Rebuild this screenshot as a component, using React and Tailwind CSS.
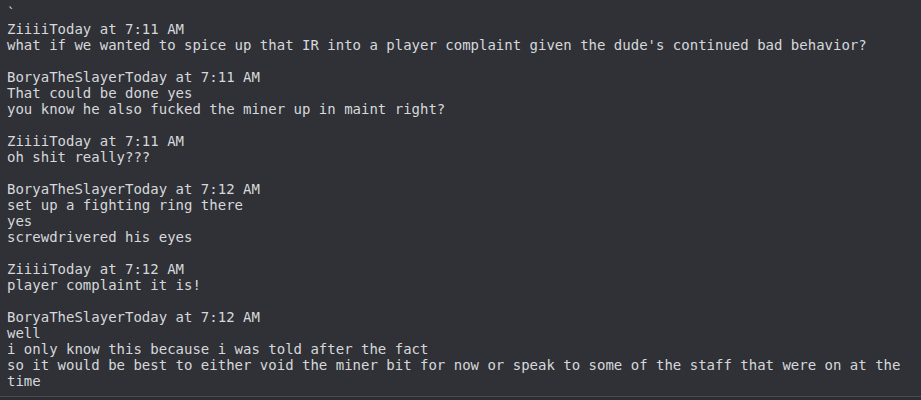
import React from "react";

const text = `\`
ZiiiiToday at 7:11 AM
what if we wanted to spice up that IR into a player complaint given the dude's continued bad behavior?

BoryaTheSlayerToday at 7:11 AM
That could be done yes
you know he also fucked the miner up in maint right?

ZiiiiToday at 7:11 AM
oh shit really???

BoryaTheSlayerToday at 7:12 AM
set up a fighting ring there
yes
screwdrivered his eyes

ZiiiiToday at 7:12 AM
player complaint it is!

BoryaTheSlayerToday at 7:12 AM
well
i only know this because i was told after the fact
so it would be best to either void the miner bit for now or speak to some of the staff that were on at the time`;

export default function App() {
  return (
    <div className="w-[921px] h-[400px] bg-[#2b2d31]">
      <pre className="w-[921px] h-[397px] overflow-hidden border-b border-[#4a4d52] bg-[#2f3136] text-[#d6d8db] pt-[5px] pl-[7px] pr-[16px] m-0 whitespace-pre-wrap break-words font-['DejaVu_Sans_Mono',monospace] text-[14px] leading-[16px]">
        {text}
      </pre>
    </div>
  );
}
